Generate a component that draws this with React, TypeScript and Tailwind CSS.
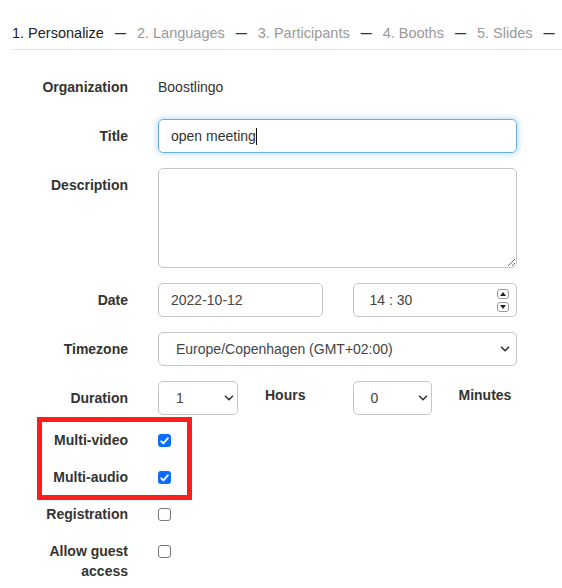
import React from "react";

const tabs = ["1. Personalize", "2. Languages", "3. Participants", "4. Booths", "5. Slides"];

function Chevron() {
  return (
    <svg width="10" height="6" viewBox="0 0 10 6" fill="none">
      <path d="M1.5 1.2 5 4.7l3.5-3.5" stroke="#333" strokeWidth="1.6" strokeLinecap="round" strokeLinejoin="round" />
    </svg>
  );
}

function Row({
  label,
  children,
  className = "",
  labelClass = "",
}: {
  label: React.ReactNode;
  children?: React.ReactNode;
  className?: string;
  labelClass?: string;
}) {
  return (
    <div className={`flex text-[14px] leading-5 ${className}`}>
      <div className={`w-[116px] shrink-0 text-right font-bold text-[#333] ${labelClass}`}>{label}</div>
      <div className="ml-[30px] w-[359px]">{children}</div>
    </div>
  );
}

function Select({ value, className = "" }: { value: string; className?: string }) {
  return (
    <div
      className={`h-[34px] flex items-center justify-between border border-[#c6c6c6] rounded-[5px] bg-white pl-[17px] text-[#444] ${className}`}
    >
      <span>{value}</span>
      <Chevron />
    </div>
  );
}

function Check({ checked }: { checked?: boolean }) {
  return checked ? (
    <span className="mt-[4px] w-[13px] h-[13px] rounded-[3px] bg-[#0b6cff] flex items-center justify-center">
      <svg width="9" height="8" viewBox="0 0 9 8" fill="none">
        <path d="M1.2 4.3 3.4 6.4 7.8 1.3" stroke="white" strokeWidth="1.8" strokeLinecap="round" strokeLinejoin="round" />
      </svg>
    </span>
  ) : (
    <span className="block mt-[4px] w-[13px] h-[13px] rounded-[3px] border border-[#767676] bg-white" />
  );
}

function Spin({ up }: { up?: boolean }) {
  return (
    <span className="w-[12px] h-[10px] border border-[#9a9a9a] rounded-[3px] flex items-center justify-center bg-white">
      <svg width="6" height="4" viewBox="0 0 6 4">
        <path d={up ? "M0 4h6L3 0z" : "M0 0h6L3 4z"} fill="#222" />
      </svg>
    </span>
  );
}

export default function App() {
  return (
    <div className="relative w-[562px] min-h-[588px] bg-white pl-[12px] font-['Liberation_Sans',Arial,sans-serif] text-[#333]">
      <div className="flex items-center pt-[23px] pb-[6px] border-b border-[#e6e6e6] text-[14.5px] leading-5 whitespace-nowrap">
        {tabs.map((t, i) => (
          <React.Fragment key={t}>
            <span className={i === 0 ? "text-[#222]" : "text-[#999]"}>{t}</span>
            <span className="mx-[11px] text-[11px] font-bold text-[#333]">—</span>
          </React.Fragment>
        ))}
      </div>

      <Row label="Organization" className="mt-[27px]">
        <span className="text-[#333]">Boostlingo</span>
      </Row>

      <Row label="Title" className="mt-[22px] items-center">
        <div className="h-[34px] flex items-center border border-[#66afe9] rounded-[5px] pl-[12px] text-[#333] shadow-[0_0_7px_rgba(102,175,233,0.6)]">
          open meeting<span className="w-px h-[17px] bg-[#111]" />
        </div>
      </Row>

      <Row label="Description" className="mt-[15px]" labelClass="pt-[7px]">
        <textarea
          readOnly
          className="block w-full h-[100px] border border-[#c6c6c6] rounded-[5px] outline-none"
        />
      </Row>

      <Row label="Date" className="mt-[15px] items-center">
        <div className="grid grid-cols-2 gap-[30px]">
          <div className="h-[34px] flex items-center border border-[#c6c6c6] rounded-[5px] pl-[12px] text-[#444]">
            2022-10-12
          </div>
          <div className="h-[34px] flex items-center justify-between border border-[#c6c6c6] rounded-[5px] pl-[16px] pr-[7px] text-[#444]">
            <span>14 : 30</span>
            <span className="flex flex-col gap-[3px]">
              <Spin up />
              <Spin />
            </span>
          </div>
        </div>
      </Row>

      <Row label="Timezone" className="mt-[15px] items-center">
        <Select value="Europe/Copenhagen (GMT+02:00)" className="pr-[6px]" />
      </Row>

      <Row label="Duration" className="mt-[15px] items-center">
        <div className="grid grid-cols-2 gap-[30px]">
          <div className="flex items-start">
            <Select value="1" className="w-[80px] pr-[3px]" />
            <span className="ml-[27px] pt-[4px] font-bold">Hours</span>
          </div>
          <div className="flex items-start">
            <Select value="0" className="w-[79px] pr-[3px]" />
            <span className="ml-[27px] pt-[4px] font-bold">Minutes</span>
          </div>
        </div>
      </Row>

      <Row label="Multi-video" className="mt-[15px]">
        <Check checked />
      </Row>
      <Row label="Multi-audio" className="mt-[17px]">
        <Check checked />
      </Row>
      <Row label="Registration" className="mt-[17px]">
        <Check />
      </Row>
      <Row label="Allow guest access" className="mt-[17px]">
        <Check />
      </Row>

      <div className="absolute left-[37px] top-[417px] w-[155px] h-[83px] border-[5px] border-[#fe1c1c] pointer-events-none" />
    </div>
  );
}
